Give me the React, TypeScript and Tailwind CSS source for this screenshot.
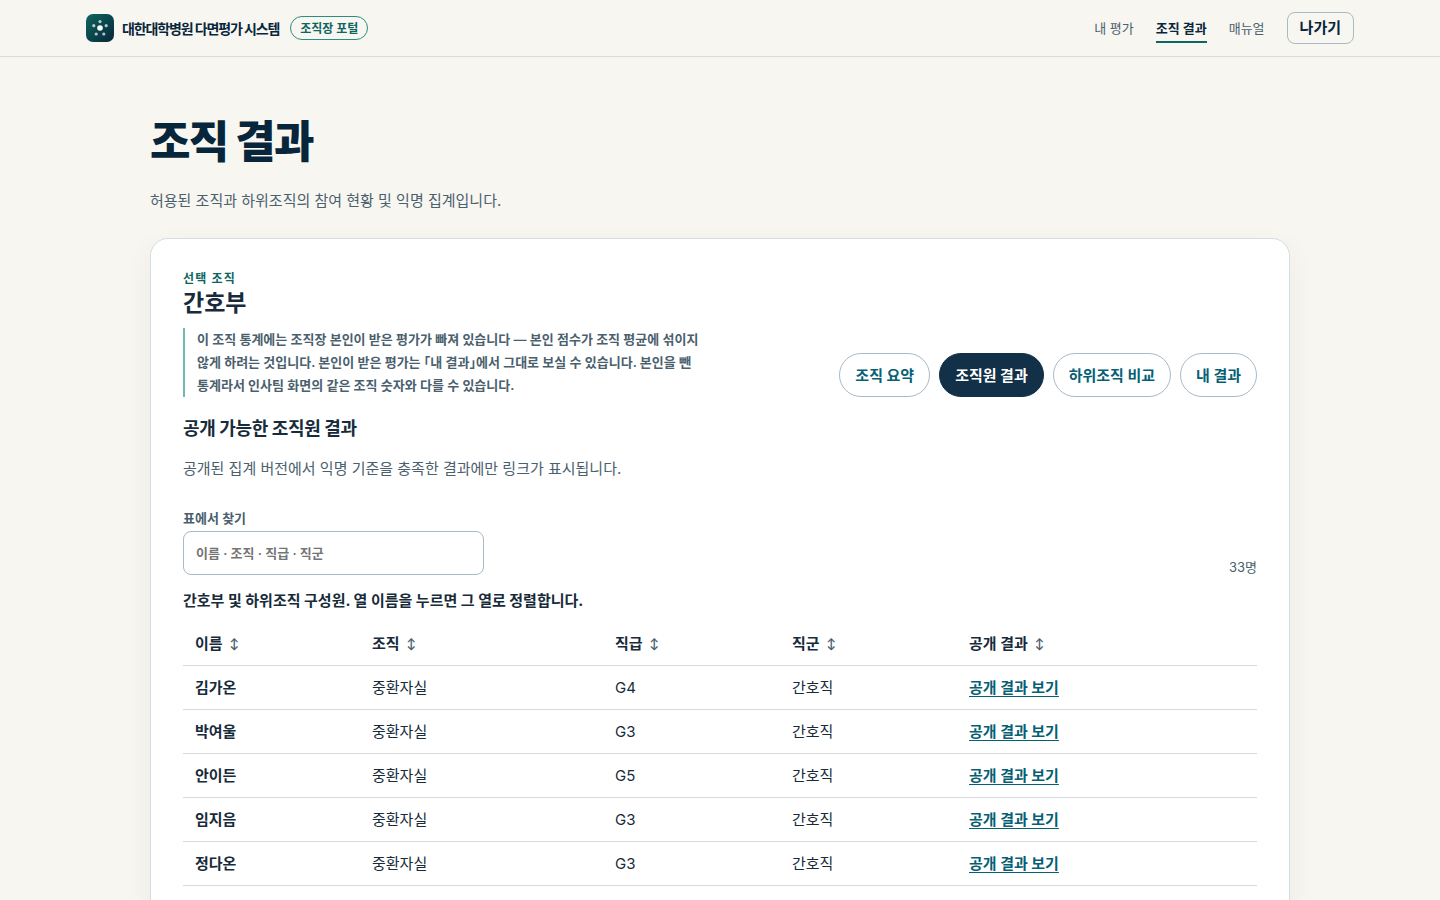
import clsx from "clsx";

const navLinks = [
  { title: "내 평가", link: "#my", active: false },
  { title: "조직 결과", link: "#org", active: true },
  { title: "매뉴얼", link: "#manual", active: false },
];

const tabs = [
  { title: "조직 요약", link: "#summary", active: false },
  { title: "조직원 결과", link: "#members", active: true },
  { title: "하위조직 비교", link: "#compare", active: false },
  { title: "내 결과", link: "#mine", active: false },
];

const columns = ["이름", "조직", "직급", "직군", "공개 결과"];

const members = [
  { name: "김가온", org: "중환자실", grade: "G4", job: "간호직" },
  { name: "박여울", org: "중환자실", grade: "G3", job: "간호직" },
  { name: "안이든", org: "중환자실", grade: "G5", job: "간호직" },
  { name: "임지음", org: "중환자실", grade: "G3", job: "간호직" },
  { name: "정다온", org: "중환자실", grade: "G3", job: "간호직" },
];

const Logo = () => (
  <svg viewBox="0 0 28 28" className="size-7" aria-hidden="true">
    <defs>
      <linearGradient id="logo-bg" x1="0" y1="0" x2="1" y2="1">
        <stop offset="0" stopColor="#0d665f" />
        <stop offset="1" stopColor="#08263b" />
      </linearGradient>
    </defs>
    <rect width="28" height="28" rx="7" fill="url(#logo-bg)" />
    <circle cx="14" cy="14" r="2.8" fill="#fff" />
    <g fill="#fff" fillOpacity="0.7">
      <circle cx="14" cy="7.6" r="1.6" />
      <circle cx="20.2" cy="11.7" r="1.6" />
      <circle cx="17.8" cy="20" r="1.6" />
      <circle cx="10.2" cy="20" r="1.6" />
      <circle cx="7.8" cy="11.7" r="1.6" />
    </g>
  </svg>
);

const Header = () => (
  <header className="border-b border-[#d3dde2]">
    <div className="mx-auto flex h-14 max-w-[1300px] items-center justify-between px-4">
      <div className="flex items-center">
        <Logo />
        <span className="ml-2 text-[14px] font-bold tracking-[-0.08em] text-[#08263b]">
          대한대학병원 다면평가 시스템
        </span>
        <span className="ml-[11px] flex h-6 items-center rounded-full border border-[#2c8c80] px-[9px] pt-0.5 text-[12px] leading-5 font-bold text-[#0d665f]">
          조직장 포털
        </span>
      </div>
      <nav className="flex items-center gap-[22px] text-[13px]">
        {navLinks.map((item) => (
          <a
            key={item.title}
            href={item.link}
            aria-current={item.active ? "page" : undefined}
            className={clsx(
              "border-y-2 border-t-transparent py-[3px] leading-5",
              item.active
                ? "border-b-[#0d665f] font-bold text-[#08263b]"
                : "border-b-transparent text-[#4a606d]"
            )}
          >
            {item.title}
          </a>
        ))}
        <button
          type="button"
          className="h-8 rounded-lg border border-[#a9bac4] px-3 text-[15px] leading-5 font-bold text-[#08263b]"
        >
          나가기
        </button>
      </nav>
    </div>
  </header>
);

export default function App() {
  return (
    <div className="min-h-screen bg-[#f8f6f1] font-[Inter,'Noto_Sans_CJK_KR',sans-serif] text-[15px] text-[#172b3a]">
      <Header />
      <main className="mx-auto max-w-[1172px] px-4 pt-[57px] pb-12">
        <h1 className="text-[44px] leading-[56px] font-extrabold tracking-[-0.04em] text-[#08263b]">
          조직 결과
        </h1>
        <p className="mt-[19px] leading-6 text-[#4a606d]">
          허용된 조직과 하위조직의 참여 현황 및 익명 집계입니다.
        </p>

        <section className="mt-[25px] rounded-[18px] border border-[#d3dde2] bg-white p-8 shadow-[0_10px_28px_rgba(60,50,20,0.06)]">
          <div className="flex items-end justify-between gap-4">
            <div className="max-w-[520px]">
              <p className="text-[12px] leading-4 font-bold tracking-widest text-[#0d665f]">
                선택 조직
              </p>
              <h2 className="text-[23px] leading-8 font-bold">간호부</h2>
              <p className="mt-[9px] border-l-2 border-[#6fb9ae] pl-3 text-[13px] leading-[23px] font-semibold text-[#4a606d] [font-feature-settings:'halt']">
                이 조직 통계에는 조직장 본인이 받은 평가가 빠져 있습니다 — 본인 점수가 조직 평균에
                섞이지 않게 하려는 것입니다. 본인이 받은 평가는 「내 결과」에서 그대로 보실 수
                있습니다. 본인을 뺀 통계라서 인사팀 화면의 같은 조직 숫자와 다를 수 있습니다.
              </p>
            </div>
            <nav className="flex gap-[9px]">
              {tabs.map((tab) => (
                <a
                  key={tab.title}
                  href={tab.link}
                  aria-current={tab.active ? "page" : undefined}
                  className={clsx(
                    "flex h-11 items-center rounded-full border px-[15px] pt-0.5 font-bold whitespace-nowrap",
                    tab.active
                      ? "border-[#123047] bg-[#123047] text-white"
                      : "border-[#a9bac4] text-[#066074]"
                  )}
                >
                  {tab.title}
                </a>
              ))}
            </nav>
          </div>

          <h3 className="mt-4 text-[18px] leading-8 font-bold tracking-[-0.02em]">
            공개 가능한 조직원 결과
          </h3>
          <p className="mt-3 leading-6 text-[#4a606d]">
            공개된 집계 버전에서 익명 기준을 충족한 결과에만 링크가 표시됩니다.
          </p>

          <div className="mt-[27px] flex items-end justify-between">
            <div className="flex flex-col gap-[3px]">
              <label htmlFor="table-search" className="text-[13px] leading-5 font-semibold text-[#4a606d]">
                표에서 찾기
              </label>
              <input
                id="table-search"
                type="search"
                placeholder="이름 · 조직 · 직급 · 직군"
                className="h-11 w-[301px] rounded-lg border border-[#a9bac4] bg-white px-3 text-[13px] font-semibold placeholder:text-[#757575]"
              />
            </div>
            <span className="text-[13px] leading-4 text-[#4a606d]">33명</span>
          </div>

          <table className="w-full table-fixed border-collapse text-left">
            <caption className="pt-3 pb-1.5 text-left leading-7 font-bold">
              간호부 및 하위조직 구성원. 열 이름을 누르면 그 열로 정렬합니다.
            </caption>
            <colgroup>
              <col className="w-[177px]" />
              <col className="w-[243px]" />
              <col className="w-[177px]" />
              <col className="w-[177px]" />
              <col />
            </colgroup>
            <thead>
              <tr className="h-11 border-b border-[#d5dbde]">
                {columns.map((column) => (
                  <th key={column} scope="col" className="px-3 pt-0.5">
                    <button type="button" className="flex items-center gap-[7px] font-bold">
                      {column}
                      <span className="text-[11px] font-bold text-[#4a606d]" aria-hidden="true">
                        ↕
                      </span>
                    </button>
                  </th>
                ))}
              </tr>
            </thead>
            <tbody>
              {members.map((member) => (
                <tr key={member.name} className="h-11 border-b border-[#d5dbde]">
                  <th scope="row" className="px-3 pt-0.5 font-bold">
                    {member.name}
                  </th>
                  <td className="px-3 pt-0.5">{member.org}</td>
                  <td className="px-3 pt-0.5">{member.grade}</td>
                  <td className="px-3 pt-0.5">{member.job}</td>
                  <td className="px-3 pt-0.5">
                    <a href="#result" className="font-bold text-[#066074] underline underline-offset-3">
                      공개 결과 보기
                    </a>
                  </td>
                </tr>
              ))}
            </tbody>
          </table>
        </section>
      </main>
    </div>
  );
}
